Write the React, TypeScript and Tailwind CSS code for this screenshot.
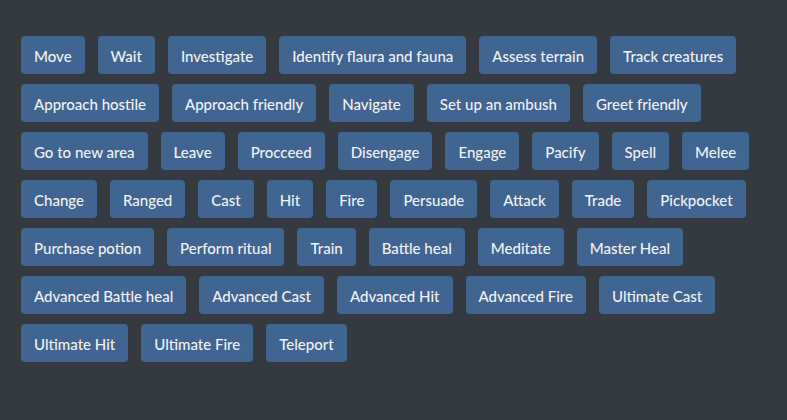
import React from "react";

const rows: string[][] = [
  ["Move", "Wait", "Investigate", "Identify flaura and fauna", "Assess terrain", "Track creatures"],
  ["Approach hostile", "Approach friendly", "Navigate", "Set up an ambush", "Greet friendly"],
  ["Go to new area", "Leave", "Procceed", "Disengage", "Engage", "Pacify", "Spell", "Melee"],
  ["Change", "Ranged", "Cast", "Hit", "Fire", "Persuade", "Attack", "Trade", "Pickpocket"],
  ["Purchase potion", "Perform ritual", "Train", "Battle heal", "Meditate", "Master Heal"],
  ["Advanced Battle heal", "Advanced Cast", "Advanced Hit", "Advanced Fire", "Ultimate Cast"],
  ["Ultimate Hit", "Ultimate Fire", "Teleport"],
];

export default function App() {
  return (
    <div
      className="min-h-[420px] w-full bg-[#353a41] px-[21px] pt-[36px]"
      style={{ fontFamily: "Lato, 'Noto Sans', sans-serif" }}
    >
      <div className="flex flex-col gap-[10px]">
        {rows.map((row, i) => (
          <div key={i} className="flex gap-[13px]">
            {row.map((label) => (
              <button
                key={label}
                className="h-[38px] whitespace-nowrap rounded-[4px] bg-[#3f6590] px-[13px] pt-[2px] text-[15px] font-medium leading-none text-[#f2f2f2]"
              >
                {label}
              </button>
            ))}
          </div>
        ))}
      </div>
    </div>
  );
}
